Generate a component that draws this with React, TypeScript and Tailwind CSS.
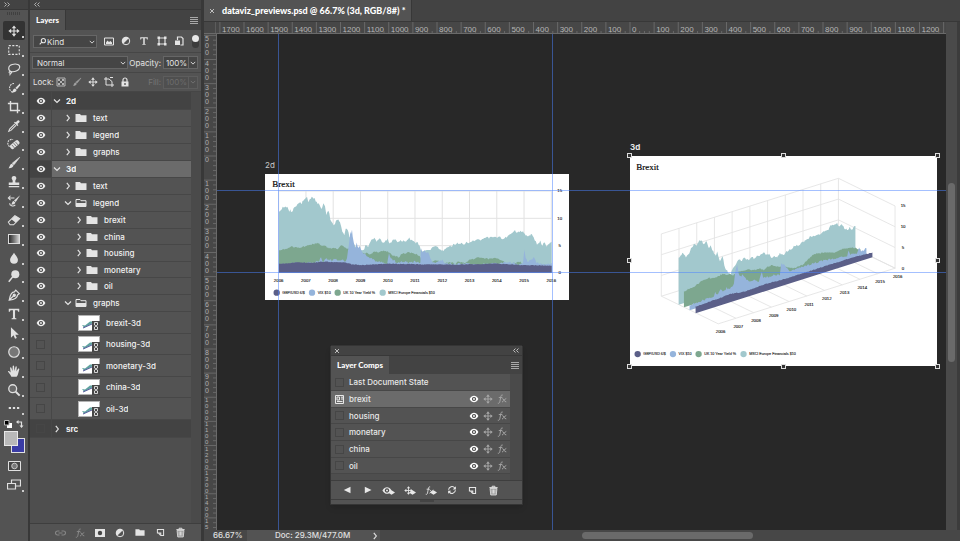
import React from "react";

type IconProps = { className?: string };
type Pt = [number, number];

/* ---------- icons ---------- */

function Svg({ children, className = "h-4 w-4", box = "0 0 16 16" }: { children: React.ReactNode; className?: string; box?: string }) {
  return (
    <svg viewBox={box} className={`shrink-0 ${className}`} fill="none" stroke="currentColor" strokeWidth="1.2" aria-hidden="true">
      {children}
    </svg>
  );
}

const MoveIcon = ({ className }: IconProps) => (
  <Svg className={className}>
    <path d="M8 3v10M3 8h10" strokeWidth="1.5" />
    <path d="M8 .5l3 3.700H5zM8 15.500l3-3.700H5zM.5 8l3.700-3v6zM15.500 8l-3.700-3v6z" fill="currentColor" stroke="none" />
  </Svg>
);
const EyeIcon = ({ className }: IconProps) => (
  <Svg className={className} box="0 0 12 10">
    <path d="M.5 5C2 2.200 4 1 6 1S10 2.200 11.500 5C10 7.800 8 9 6 9S2 7.800 .5 5z" fill="currentColor" stroke="none" />
    <circle cx="6" cy="5" r="2.600" fill="#484848" stroke="none" />
    <circle cx="6" cy="5" r="1.200" fill="currentColor" stroke="none" />
  </Svg>
);
const FolderIcon = ({ open, className = "h-[10px] w-[12px]" }: { open?: boolean; className?: string }) => (
  <Svg className={className} box="0 0 12 10">
    {open ? (
      <>
        <path d="M1 8.500V1.500h4l1 1.200h5v5.800z" strokeWidth="1" />
        <path d="M1 5h10v4H1z" fill="currentColor" stroke="none" />
      </>
    ) : (
      <path d="M.5 9V1h4.500l1 1.300h5.500V9z" fill="currentColor" stroke="none" />
    )}
  </Svg>
);
const Caret = ({ down, className = "h-[8px] w-[8px]" }: { down?: boolean; className?: string }) => (
  <Svg className={className} box="0 0 8 8">
    {down ? <path d="M1 2.500l3 3 3-3" /> : <path d="M2.800 .8l2.500 3.200-2.500 3.200" />}
  </Svg>
);
const MenuIcon = () => (
  <Svg className="h-[7px] w-[8px]" box="0 0 8 7">
    <path d="M0 .5h8M0 2.500h8M0 4.500h8M0 6.500h8" strokeWidth="1" />
  </Svg>
);
const DoubleChevron = ({ left }: { left?: boolean }) => (
  <Svg className="h-[5px] w-[6px]" box="0 0 6 5">
    {left ? <path d="M2.500 .5l-2 2 2 2M5.500 .5l-2 2 2 2" strokeWidth=".9" /> : <path d="M.5 .5l2 2-2 2M3.500 .5l2 2-2 2" strokeWidth=".9" />}
  </Svg>
);
const CloseIcon = () => (
  <Svg className="h-[6px] w-[6px]" box="0 0 6 6">
    <path d="M1 1l4 4M5 1L1 5" strokeWidth=".9" />
  </Svg>
);
const BrushIcon = ({ className }: IconProps) => (
  <Svg className={className}>
    <path d="M14.500 1.500L8 10 6 8.200z" fill="currentColor" strokeWidth=".8" />
    <path d="M5.600 8.800l1.900 1.900c-.5 2.500-3 3.600-6 3.300 1.800-1 1.300-4.600 4.100-5.200z" fill="currentColor" stroke="none" />
  </Svg>
);
const TrashIcon = ({ className }: IconProps) => (
  <Svg className={className}>
    <path d="M3 5l1 9.500h8L13 5z" fill="currentColor" fillOpacity=".45" />
    <path d="M2 3.800h12M6 3.500V1.800h4v1.700" strokeWidth="1.400" />
    <path d="M6 6.500v6M8 6.500v6M10 6.500v6" />
  </Svg>
);
const NewIcon = ({ className }: IconProps) => (
  <Svg className={className}>
    <path d="M2.500 2.500h11v11H8.500v-4.500h-6z" strokeWidth="1.800" />
    <path d="M3.500 9.500l4.500 4.500V9.500z" fill="currentColor" stroke="none" />
  </Svg>
);
const AdjustIcon = ({ className }: IconProps) => (
  <Svg className={className}>
    <circle cx="8" cy="8" r="6" strokeWidth="1.600" />
    <path d="M12.500 3.500A6.300 6.300 0 0 0 3.500 12.500z" fill="currentColor" stroke="none" />
  </Svg>
);
const TypeIcon = ({ className }: IconProps) => (
  <Svg className={className}>
    <path d="M2 2h12v3.500h-1.200L12 3.700H9.200v9l1.600.5V14H5.200v-.8l1.600-.5v-9H4l-.8 1.800H2z" fill="currentColor" stroke="none" />
  </Svg>
);
const FxIcon = ({ className = "h-[11px] w-[11px]" }: IconProps) => (
  <Svg className={className} box="0 0 14 14">
    <path d="M8 1.500C6 .8 5.500 2.500 5.100 5L3.900 11c-.4 2-1.500 2.300-2.800 1.800M2.500 5h5M7.500 6.500c2-.8 2.200 5 5.500 4.500M13 6.200c-2 0-4 5-6 5" strokeWidth="1.300" />
  </Svg>
);
const RefreshIcon = ({ className }: IconProps) => (
  <Svg className={className}>
    <path d="M2.500 7.500a5.500 5.500 0 0 1 9.800-2.800M13.500 8.500a5.500 5.500 0 0 1-9.800 2.800" strokeWidth="1.700" />
    <path d="M14.200 2v5H9.200zM1.800 14V9h5z" fill="currentColor" stroke="none" />
  </Svg>
);
const Applied = ({ kind }: { kind: "eye" | "move" | "fx" }) => (
  <span className="flex items-end">
    {kind === "eye" && <EyeIcon className="h-[9px] w-[10px]" />}
    {kind === "move" && <MoveIcon className="h-[9px] w-[9px]" />}
    {kind === "fx" && <FxIcon className="h-[9px] w-[9px]" />}
    <Svg className="-ml-1 h-[5px] w-[7px]" box="0 0 7 5">
      <path d="M0 2.500L3.500 .3 7 2.500 3.500 4.800z" fill="currentColor" stroke="none" />
    </Svg>
  </span>
);

/* ---------- tool bar ---------- */

const tools: { name: string; art: React.ReactNode }[] = [
  { name: "Move", art: <MoveIcon className="h-3 w-3" /> },
  { name: "Marquee", art: <Svg className="h-[14px] w-[14px]"><path d="M2 3h12v10H2z" strokeDasharray="2.400 1.600" /></Svg> },
  { name: "Lasso", art: <Svg className="h-[14px] w-[14px]"><path d="M5 11C.5 9.500 1 4 6 2.800s9 .2 8.500 3.400S9.500 11.500 5 11zM4.500 11.500c-1.500-1.500-3 .5-1.500 1.200s3-.4 2-1.700M3.800 12.800c.2 1 .1 1.500-.8 2.400" /></Svg> },
  { name: "Quick selection", art: <Svg className="h-[14px] w-[14px]"><path d="M8 3a4.500 5 0 1 0-1 10" strokeDasharray="2 1" /><path d="M15 2.500L9.500 8l2 1.500L15 5z" fill="currentColor" stroke="none" /><path d="M9 8.500c-2.500.3-2 3.500-4 4.500 3 .5 5.800-.5 6-3z" fill="currentColor" stroke="none" /></Svg> },
  { name: "Crop", art: <Svg className="h-[14px] w-[14px]"><path d="M4 1v11h11M1 4h11v11" strokeWidth="1.600" /></Svg> },
  { name: "Eyedropper", art: <Svg className="h-[14px] w-[14px]"><path d="M9 5.500L3 11.500 2 14l2.500-1 6-6" /><path d="M8 4l4 4 1-1-1-1.200 2.200-2.200c1-1-.8-3-2-2L10 3.800 9 3z" fill="currentColor" stroke="none" /></Svg> },
  { name: "Healing brush", art: <Svg className="h-[14px] w-[14px]"><path d="M3 11a4.500 4.500 0 0 1 4-8" strokeDasharray="2 1" /><rect x="3" y="6" width="12" height="5.500" rx="2" transform="rotate(-40 9 9)" fill="currentColor" stroke="none" /><path d="M7.500 7l3.500 4M5.500 9l3.500 4M9.500 5.500l3.500 4" stroke="#535353" strokeWidth=".8" /></Svg> },
  { name: "Brush", art: <BrushIcon className="h-[14px] w-[14px]" /> },
  { name: "Clone stamp", art: <Svg className="h-[14px] w-[14px]"><path d="M8 1a2.700 2.700 0 0 1 2 4.500c-.8 1-.5 2-.3 3H14v3H2v-3h4.300c.2-1 .5-2-.3-3A2.700 2.700 0 0 1 8 1zM2 12.500h12V14H2z" fill="currentColor" stroke="none" /></Svg> },
  { name: "History brush", art: <Svg className="h-[14px] w-[14px]"><path d="M2 4.500h6.500M4 2L1.500 4.500 4 7M3 10.500c0 3 4 4.500 6.500 2" /><path d="M15 1.500L10 9 8 7.500z" fill="currentColor" stroke="none" /><path d="M7.600 8l2 1.700c-.5 2-2.600 2.500-5 2.300 1.500-1 1-3.500 3-4z" fill="currentColor" stroke="none" /></Svg> },
  { name: "Eraser", art: <Svg className="h-[14px] w-[14px]"><path d="M1.500 10.500L9 3l5.500 3.500-7 7h-4z" /><path d="M5 7l4-4 5.500 3.500-4.500 4.500z" fill="currentColor" stroke="none" /></Svg> },
  { name: "Gradient", art: <span className="h-[10px] w-[12px] border border-[#dcdcdc] bg-linear-to-r from-[#2c2c2c] to-[#d0d0d0]" /> },
  { name: "Blur", art: <Svg className="h-[14px] w-[14px]"><path d="M8 2c2 3.500 4.500 5.500 4.500 8a4.500 4.500 0 0 1-9 0c0-2.500 2.500-4.500 4.500-8z" fill="currentColor" stroke="none" /></Svg> },
  { name: "Dodge", art: <Svg className="h-[14px] w-[14px]"><circle cx="9.500" cy="6" r="4.600" fill="currentColor" stroke="none" /><path d="M6.500 9L2 14.500" strokeWidth="1.800" /></Svg> },
  { name: "Pen", art: <Svg className="h-[14px] w-[14px]"><path d="M10 2.500l4 4-2 1.500c0 3-3 5-9.500 6C3.500 8 5 4.500 8.500 4.500zM2.800 13.500L8 8.500" strokeWidth="1.400" /><circle cx="8.300" cy="8.300" r="1.300" fill="currentColor" /></Svg> },
  { name: "Type", art: <TypeIcon className="h-[14px] w-[14px]" /> },
  { name: "Path selection", art: <Svg className="h-[14px] w-[14px]"><path d="M4.500 1.500v12l3-2.800 1.700 4 2-.9-1.700-3.800h4z" fill="currentColor" stroke="none" /></Svg> },
  { name: "Ellipse", art: <Svg className="h-[14px] w-[14px]"><circle cx="8" cy="8" r="6" fill="#777777" strokeWidth="1.400" /></Svg> },
  { name: "Hand", art: <Svg className="h-[14px] w-[14px]"><path d="M5 14.500C4 12 2.500 10.500 1 8.500c.8-1 2-.4 3.200 1.200L3.500 4.500c0-1 1.300-1.200 1.600 0L6.200 8 6.500 2.500c.1-1.200 1.500-1.200 1.600 0L8.500 8l1.200-4.800c.3-1.200 1.600-.8 1.500.3L10.800 8.500l1.800-3c.6-.9 1.700-.3 1.400.7-1 3-1 6-3 8.300z" fill="currentColor" stroke="none" /></Svg> },
  { name: "Zoom", art: <Svg className="h-[14px] w-[14px]"><circle cx="6.500" cy="6.500" r="4.500" fill="#6a6a6a" strokeWidth="1.500" /><path d="M10 10l4.500 4.500" strokeWidth="2.200" /></Svg> },
  { name: "Edit toolbar", art: <Svg className="h-[14px] w-[14px]"><path d="M2 8h2.600M6.700 8h2.600M11.400 8H14" strokeWidth="2.400" /></Svg> },
];

const cornerMark = "absolute right-[1px] bottom-[2px] h-[2px] w-[2px] bg-[#cccccc]";

function Toolbar() {
  return (
    <nav aria-label="Tools" className="flex w-[28px] shrink-0 flex-col bg-[#535353] text-[#e0e0e0]">
      <div className="flex h-[10px] items-center border-b border-[#383838] bg-[#434343] pl-1 text-[#bbbbbb]">
        <DoubleChevron />
      </div>
      <div className="mx-auto mt-[2px] h-[3px] w-[14px] bg-[repeating-linear-gradient(90deg,#404040_0_1px,#535353_1px_2px)]" />
      <div className="flex flex-col items-center pt-[6px]">
        {tools.map((t, i) => (
          <button
            key={t.name}
            aria-label={t.name}
            className={`relative flex w-[22px] items-center justify-center ${i % 7 === 6 ? "h-[18px]" : "h-[19px]"} ${i === 0 ? "rounded-xs bg-[#333333]" : ""}`}
          >
            {t.art}
            <span className={cornerMark} />
          </button>
        ))}
      </div>
      <div className="mx-auto mt-[3px] flex w-[20px] justify-between">
        <button aria-label="Default colours">
          <Svg className="h-[8px] w-[8px]" box="0 0 8 8">
            <path d="M3 3h5v5H3z" fill="#ffffff" stroke="none" />
            <path d="M.5 .5h4.500v4.500H.5z" fill="#000000" stroke="#bbbbbb" strokeWidth="1" />
          </Svg>
        </button>
        <button aria-label="Swap colours">
          <Svg className="h-[8px] w-[8px]" box="0 0 8 8">
            <path d="M2 2h3.500v4" />
            <path d="M0 2l2.500-2v4zM3.500 5.500h4L5.500 8z" fill="currentColor" stroke="none" />
          </Svg>
        </button>
      </div>
      <div className="mx-auto mt-[3px] grid h-[22px] w-[21px] grid-cols-3 grid-rows-3">
        <button aria-label="Background colour" className="col-start-2 col-end-4 row-start-2 row-end-4 border border-[#e0e0e0] bg-[#3a3ca5]" />
        <button aria-label="Foreground colour" className="col-start-1 col-end-3 row-start-1 row-end-3 border border-[#e8e8e8] bg-[#b9b9b9]" />
      </div>
      <div className="mt-[3px] flex flex-col items-center">
        <button aria-label="Quick mask" className="flex h-[19px] items-center">
          <Svg className="h-[10px] w-[13px]" box="0 0 13 10">
            <path d="M.5 .5h12v9H.5z" fill="#454545" strokeWidth="1" />
            <circle cx="6.500" cy="5" r="2.800" fill="#777777" strokeWidth=".8" />
          </Svg>
        </button>
        <button aria-label="Screen mode" className="relative flex h-[19px] w-[22px] items-center justify-center">
          <Svg className="h-[11px] w-[14px]" box="0 0 14 11">
            <path d="M4.500 1h9v6h-9z" />
            <path d="M.5 4.500h8v5.500h-8z" fill="#535353" />
          </Svg>
          <span className={cornerMark} />
        </button>
      </div>
    </nav>
  );
}

/* ---------- layers panel ---------- */

type Layer = {
  name: string;
  kind: "group" | "folder" | "smart";
  level: 0 | 1 | 2;
  open?: boolean;
  hidden?: boolean;
  selected?: boolean;
};

const layers: Layer[] = [
  { name: "2d", kind: "group", level: 0, open: true },
  { name: "text", kind: "folder", level: 1 },
  { name: "legend", kind: "folder", level: 1 },
  { name: "graphs", kind: "folder", level: 1 },
  { name: "3d", kind: "group", level: 0, open: true, selected: true },
  { name: "text", kind: "folder", level: 1 },
  { name: "legend", kind: "folder", level: 1, open: true },
  { name: "brexit", kind: "folder", level: 2 },
  { name: "china", kind: "folder", level: 2 },
  { name: "housing", kind: "folder", level: 2 },
  { name: "monetary", kind: "folder", level: 2 },
  { name: "oil", kind: "folder", level: 2 },
  { name: "graphs", kind: "folder", level: 1, open: true },
  { name: "brexit-3d", kind: "smart", level: 2 },
  { name: "housing-3d", kind: "smart", level: 2, hidden: true },
  { name: "monetary-3d", kind: "smart", level: 2, hidden: true },
  { name: "china-3d", kind: "smart", level: 2, hidden: true },
  { name: "oil-3d", kind: "smart", level: 2, hidden: true },
  { name: "src", kind: "group", level: 0, hidden: true },
];

const Thumb = () => (
  <Svg className="h-[16px] w-[22px]" box="0 0 22 16">
    <path d="M0 0h22v16H0z" fill="#ffffff" stroke="none" />
    <path d="M.5 .5h21v15H.5z" stroke="#666666" strokeWidth="1" strokeDasharray="1 1" />
    <path d="M4 10l3 .5 5-4h2v2L6 12.500z" fill="#5fa39f" stroke="none" />
    <path d="M5 12.500l9-4v1l-9 4z" fill="#4f5699" stroke="none" />
    <path d="M14 6h8v10h-8z" fill="#484848" stroke="none" />
    <path d="M16.500 7.500h3v2.500l-3 2v2.500h3V12l-3-2z" stroke="#e6e6e6" strokeWidth=".9" />
  </Svg>
);

const emptyBox = "h-[9px] w-[9px] border border-[#464646]";

function rowHeight(layer: Layer, index: number) {
  if (layer.kind === "smart") return index % 2 ? "h-[22px]" : "h-[21px]";
  if (layer.kind === "group") return layer.selected ? "h-[17px]" : "h-[18px]";
  return layer.level === 2 && index % 2 === 0 ? "h-[16px]" : "h-[17px]";
}

function LayerRow({ layer, index }: { layer: Layer; index: number }) {
  const tone = layer.selected ? "bg-[#6b6b6b]" : layer.kind === "group" ? "bg-[#434343]" : "bg-[#535353]";
  const indent = layer.kind === "smart" ? "pl-[26px]" : layer.level === 0 ? "pl-[1px]" : layer.level === 1 ? "pl-[12px]" : "pl-[23px]";
  return (
    <li className={`flex border-b border-[#474747] ${rowHeight(layer, index)}`}>
      <button
        aria-label={`Toggle visibility of ${layer.name}`}
        className={`flex w-[22px] shrink-0 items-center justify-center border-r border-[#474747] text-[#f0f0f0] ${layer.kind === "group" ? "bg-[#434343]" : "bg-[#535353]"}`}
      >
        {layer.hidden ? <span className={emptyBox} /> : <EyeIcon className="h-[8px] w-[10px]" />}
      </button>
      <div className={`flex min-w-0 flex-1 items-center text-[#e4e4e4] ${tone} ${indent}`}>
        {layer.kind !== "smart" && (
          <button aria-label={`Expand ${layer.name}`} className="mr-[3px]">
            <Caret down={layer.open} />
          </button>
        )}
        {layer.kind === "folder" && <FolderIcon open={layer.open} />}
        {layer.kind === "smart" && <Thumb />}
        <span className={`truncate text-[8px] leading-3 text-[#f2f2f2] ${layer.kind === "group" ? "pl-[2px] font-bold" : "pl-[6px] font-medium"}`}>
          {layer.name}
        </span>
      </div>
    </li>
  );
}

const field = "border border-[#666666] bg-[#454545]";

function LayersPanel() {
  return (
    <aside className="flex w-[171px] shrink-0 flex-col bg-[#535353] text-[8px] leading-3 text-[#e4e4e4]">
      <div className="flex h-[10px] items-center border-b border-[#383838] bg-[#434343] pl-1 text-[#bbbbbb]">
        <DoubleChevron left />
      </div>
      <div className="flex h-[20px] items-stretch justify-between bg-[#434343]">
        <h2 className="flex items-center border-r border-[#383838] bg-[#535353] px-[6px] font-['Lato',sans-serif] text-[8px] font-black text-white">Layers</h2>
        <button aria-label="Panel menu" className="pr-[3px] text-[#a8a8a8]"><MenuIcon /></button>
      </div>

      <div className="flex h-[23px] items-center border-b border-[#464646] pr-[2px] pl-[3px]">
        <div className="relative w-[64px]">
          <select aria-label="Filter kind" className={`block h-[13px] w-full appearance-none pl-[13px] ${field}`}>
            <option>Kind</option>
          </select>
          <Svg className="pointer-events-none absolute top-[3px] left-[6px] h-[7px] w-[7px]" box="0 0 8 8">
            <circle cx="5" cy="3" r="2.400" /><path d="M3.300 4.700L.8 7.300" />
          </Svg>
          <Caret down className="pointer-events-none absolute top-[4px] right-[2px] h-[6px] w-[6px]" />
        </div>
        <div className="flex flex-1 items-center justify-around pr-1 pl-[3px]">
          <button aria-label="Pixel layers">
            <Svg className="h-[9px] w-[10px]" box="0 0 10 9"><path d="M.5 1h9v7h-9z" strokeWidth="1" /><path d="M2 7V5.500l1.500-2L5 5l1.500-1L8 5.500V7z" fill="currentColor" stroke="none" /></Svg>
          </button>
          <button aria-label="Adjustment layers"><AdjustIcon className="h-[10px] w-[10px]" /></button>
          <button aria-label="Type layers"><TypeIcon className="h-[10px] w-[10px]" /></button>
          <button aria-label="Shape layers">
            <Svg className="h-[10px] w-[10px]" box="0 0 10 10"><path d="M2 2h6v6H2z" /><path d="M.5 .5h2.500v2.500H.5zM7 .5h2.500v2.500H7zM.5 7h2.500v2.500H.5zM7 7h2.500v2.500H7z" fill="currentColor" stroke="none" /></Svg>
          </button>
          <button aria-label="Smart objects">
            <Svg className="h-[10px] w-[10px]" box="0 0 10 10"><path d="M3.500 4V1h4l1.500 1.500V9H6.500" /><path d="M1 4.500h5V9H1z" fill="currentColor" stroke="none" /></Svg>
          </button>
        </div>
        <button aria-label="Filter on or off" className="h-[13px] w-[7px] items-start! rounded-full bg-[#3c3c3c]">
          <span className="block h-[7px] w-[7px] rounded-full bg-[#e8e8e8]" />
        </button>
      </div>

      <div className="flex h-[20px] items-center justify-between border-b border-[#464646] pr-[3px] pl-[2px]">
        <div className="relative w-[96px]">
          <select aria-label="Blend mode" className={`block h-[13px] w-full appearance-none pl-[4px] ${field}`}>
            <option>Normal</option>
          </select>
          <Caret down className="pointer-events-none absolute top-[4px] right-[2px] h-[6px] w-[6px]" />
        </div>
        <label className="flex items-center gap-[2px]">
          Opacity:
          <span className="flex">
            <input defaultValue="100%" className={`h-[13px] w-[26px] pl-[2px] ${field}`} />
            <span className={`-ml-px flex w-[10px] items-center justify-center ${field}`}><Caret down className="h-[6px] w-[6px]" /></span>
          </span>
        </label>
      </div>

      <div className="flex h-[19px] items-center justify-between border-b border-[#464646] pr-[3px] pl-[3px]">
        <div className="flex items-center gap-[2px]">
          <span>Lock:</span>
          <div className="flex items-center gap-[6px]">
            <button aria-label="Lock transparent pixels">
              <Svg className="h-[10px] w-[10px]" box="0 0 10 10">
                <path d="M1 1h8v8H1z" stroke="#b4b4b4" strokeWidth="1" />
                <path d="M2 2h2v2H2zM6 2h2v2H6zM4 4h2v2H4zM2 6h2v2H2zM6 6h2v2H6z" fill="#b4b4b4" stroke="none" />
              </Svg>
            </button>
            <button aria-label="Lock image pixels" className="text-[#a0a0a0]"><BrushIcon className="h-[10px] w-[10px]" /></button>
            <button aria-label="Lock position"><MoveIcon className="h-[10px] w-[10px]" /></button>
            <button aria-label="Lock artboard nesting">
              <Svg className="h-[10px] w-[10px]" box="0 0 10 10"><path d="M2 0v8h8M0 2h5l3 2.500V10M6 .5h3" strokeWidth="1" /></Svg>
            </button>
            <button aria-label="Lock all">
              <Svg className="h-[10px] w-[10px]" box="0 0 10 10"><path d="M3 5V3a2 2 0 0 1 4 0v2" /><path d="M1.500 4.500h7V9.500h-7z" fill="currentColor" stroke="none" /><path d="M5 6v2" stroke="#444444" /></Svg>
            </button>
          </div>
        </div>
        <label className="flex items-center gap-[2px] text-[#757575]">
          Fill:
          <span className="flex">
            <input disabled defaultValue="100%" className="h-[13px] w-[26px] border border-[#5d5d5d] bg-[#4f4f4f] pl-[2px] text-[#6c6c6c]" />
            <span className="-ml-px flex w-[10px] items-center justify-center border border-[#5d5d5d] bg-[#4f4f4f]"><Caret down className="h-[6px] w-[6px]" /></span>
          </span>
        </label>
      </div>

      <div className="flex min-h-0 flex-1 bg-[#4e4e4e]">
        <ul className="min-w-0 flex-1">
          {layers.map((l, i) => <LayerRow key={i} layer={l} index={i} />)}
        </ul>
        <div className="w-[10px] bg-[#4a4a4a]" />
      </div>

      <div className="flex h-[18px] items-center border-t border-[#3e3e3e] pl-[20px] *:w-[20px]">
        <button aria-label="Link layers" className="text-[#858585]">
          <Svg className="h-[6px] w-[11px]" box="0 0 11 6"><path d="M4.500 1h-2a2 2 0 0 0 0 4h2M6.500 1h2a2 2 0 0 1 0 4h-2M3.500 3h4" /></Svg>
        </button>
        <button aria-label="Layer style" className="text-[#8a8a8a]"><FxIcon className="h-[10px] w-[10px]" /></button>
        <button aria-label="Add mask">
          <Svg className="h-[8px] w-[10px]" box="0 0 10 8"><path d="M0 0h10v8H0z" fill="currentColor" stroke="none" /><circle cx="5" cy="4" r="2.200" fill="#444444" stroke="none" /></Svg>
        </button>
        <button aria-label="New adjustment layer"><AdjustIcon className="h-[10px] w-[10px]" /></button>
        <button aria-label="New group"><FolderIcon className="h-[9px] w-[10px]" /></button>
        <button aria-label="New layer"><NewIcon className="h-[9px] w-[9px]" /></button>
        <button aria-label="Delete layer"><TrashIcon className="h-[11px] w-[11px]" /></button>
      </div>
    </aside>
  );
}

/* ---------- rulers ---------- */

const STEP = 24.125;
const ZERO_X = 414;
const ZERO_Y = 122;
const rulerText = "font-['Liberation_Sans',Arial,sans-serif]";

function HorizontalRuler() {
  const marks = Array.from({ length: 31 }, (_, i) => i - 17);
  return (
    <svg className="h-full min-w-0 flex-1" aria-hidden="true">
      {marks.map((m) => {
        const x = ZERO_X + m * STEP;
        return (
          <g key={m}>
            <path d={`M${x} 0V12`} stroke="#686868" />
            {[1, 2, 3, 4].map((k) => <path key={k} d={`M${x + (k * STEP) / 5} 9V12`} stroke="#686868" />)}
            {m < 13 && <text x={x + 2} y="10" fill="#b4b4b4" fontSize="8" className={rulerText}>{Math.abs(m) * 100}</text>}
          </g>
        );
      })}
    </svg>
  );
}

function VerticalRuler() {
  const marks = Array.from({ length: 21 }, (_, i) => i - 5);
  return (
    <svg className="h-full w-[13px] shrink-0 border-r border-[#6a6a6a] bg-[#474747]" aria-hidden="true">
      {marks.map((m) => {
        const y = ZERO_Y + m * STEP;
        const digits = String(Math.abs(m) * 100).split("");
        const small = digits.length > 3;
        return (
          <g key={m}>
            <path d={`M0 ${y}H12`} stroke="#686868" />
            {[1, 2, 3, 4].map((k) => <path key={k} d={`M9 ${y + (k * STEP) / 5}H12`} stroke="#686868" />)}
            <text y={y + (small ? 5 : 6)} fill="#b0b0b0" fontSize={small ? 6 : 7} className={rulerText}>
              {digits.map((d, k) => (
                <tspan key={k} x="1" dy={k === 0 ? 0 : small ? 6 : 7}>{d}</tspan>
              ))}
            </text>
          </g>
        );
      })}
    </svg>
  );
}

/* ---------- charts ---------- */

const NAVY = "#5b5f88";
const BLUE = "#95b4db";
const GREEN = "#7da78f";
const TEAL = "#a2c8cd";

// Turns coarse samples into a daily-looking outline with a small repeatable jitter.
function area(points: Pt[], base: string, jitter: number) {
  const out: string[] = [];
  let seed = 7;
  for (let i = 0; i < points.length - 1; i++) {
    const [x0, y0] = points[i];
    const [x1, y1] = points[i + 1];
    const n = Math.max(1, Math.round((x1 - x0) / 3));
    for (let k = 0; k < n; k++) {
      seed = (seed * 1103 + 12345) % 65536;
      const j = (seed / 65536 - 0.5) * jitter;
      out.push(`${(x0 + ((x1 - x0) * k) / n).toFixed(1)},${(y0 + ((y1 - y0) * k) / n + j).toFixed(1)}`);
    }
  }
  const last = points[points.length - 1];
  return `M${out.join("L")}L${last[0]},${last[1]}${base}`;
}

const flatTeal: Pt[] = [[72,168],[80,158],[86,152],[97,152],[103,165],[106,160],[108,172],[113,164],[118,158],[124,152],[130,142],[136,138],[140,146],[145,132],[152,128],[156,126],[160,142],[165,131],[170,126],[176,126],[182,134],[188,145],[194,148],[200,158],[205,145],[210,155],[214,175],[220,162],[226,190],[233,203],[238,208],[243,194],[250,190],[255,200],[262,228],[268,236],[272,218],[278,226],[283,240],[290,258],[300,272],[310,282],[320,284],[328,278],[333,268],[340,272],[346,256],[352,252],[358,248],[365,256],[374,250],[381,258],[385,262],[392,255],[398,250],[404,264],[412,254],[420,250],[424,258],[434,254],[442,258],[448,254],[456,256],[463,248],[470,255],[480,260],[488,262],[494,270],[498,285],[507,284],[515,284],[524,286],[532,275],[540,272],[546,272],[552,283],[562,285],[572,280],[582,274],[592,270],[604,262],[616,262],[624,267],[634,260],[644,264],[654,256],[664,250],[676,252],[690,244],[702,247],[714,244],[726,248],[736,244],[742,250],[752,246],[762,240],[770,232],[780,226],[788,232],[796,226],[804,226],[812,240],[820,240],[828,236],[836,246],[846,266],[856,258],[862,270],[868,258],[874,272],[882,264],[890,258]];
const flatGreen: Pt[] = [[72,284],[84,280],[96,278],[108,272],[120,276],[134,276],[148,272],[160,270],[172,266],[186,262],[198,268],[210,272],[225,278],[238,276],[248,280],[258,268],[268,274],[280,280],[300,290],[325,292],[335,292],[345,296],[358,288],[372,290],[386,285],[398,288],[405,292],[415,300],[432,304],[440,295],[460,290],[478,294],[492,300],[497,305],[500,320],[530,320],[540,314],[550,316],[556,324],[575,322],[590,320],[600,325],[610,316],[622,322],[634,320],[642,314],[655,310],[665,305],[680,305],[700,310],[720,308],[735,312],[745,316],[752,325],[780,322],[796,318],[805,326],[820,318],[830,325],[860,326],[890,330]];
const flatBlue: Pt[] = [[72,324],[180,322],[186,314],[192,320],[198,304],[204,318],[212,312],[222,310],[230,314],[240,308],[250,314],[262,312],[270,318],[276,306],[281,275],[284,250],[286,225],[288,236],[291,222],[293,240],[296,262],[300,280],[305,262],[310,275],[314,268],[318,282],[324,290],[335,300],[345,306],[356,312],[368,320],[380,318],[396,326],[402,292],[408,308],[416,314],[430,322],[445,316],[460,322],[480,318],[496,320],[498,275],[502,290],[508,285],[514,295],[520,290],[526,308],[532,320],[545,322],[562,312],[568,324],[600,324],[700,326],[760,320],[790,325],[804,324],[808,280],[812,305],[820,320],[838,305],[845,322],[870,326],[890,322]];
const flatNavy: Pt[] = [[72,324],[130,320],[170,322],[200,318],[270,320],[290,326],[320,328],[400,324],[500,326],[600,327],[720,324],[800,328],[890,330]];

const deepTeal: Pt[] = [[174,355],[180,345],[188,338],[196,350],[206,338],[214,322],[220,314],[228,318],[236,300],[244,304],[250,312],[258,306],[264,325],[270,318],[278,335],[286,348],[290,338],[298,362],[306,352],[314,385],[322,396],[330,403],[336,385],[344,376],[350,365],[356,358],[364,362],[370,356],[380,358],[388,360],[394,350],[400,355],[412,346],[420,346],[430,336],[438,345],[446,343],[454,355],[462,350],[470,352],[478,340],[488,345],[498,335],[508,330],[520,320],[532,316],[545,308],[556,302],[568,292],[580,288],[590,283],[600,284],[612,274],[624,270],[630,256],[640,258],[650,250],[656,260],[664,254],[672,266],[680,270],[688,262],[694,268],[705,258]];
const deepGreen: Pt[] = [[190,455],[205,446],[220,440],[235,430],[250,420],[266,414],[280,416],[292,410],[306,402],[316,405],[326,402],[335,408],[350,395],[370,392],[385,388],[400,392],[415,386],[430,390],[440,380],[455,376],[470,380],[485,382],[500,382],[520,385],[545,375],[560,362],[570,350],[585,342],[600,340],[620,336],[640,340],[660,330],[680,325],[700,324],[720,328]];
const deepBlue: Pt[] = [[207,496],[225,488],[240,484],[280,470],[284,458],[292,464],[300,450],[310,455],[318,444],[328,448],[335,440],[340,430],[344,395],[350,378],[354,402],[360,408],[368,405],[378,418],[388,424],[400,420],[415,425],[424,398],[428,412],[445,412],[460,404],[478,405],[482,370],[490,374],[500,386],[510,395],[530,385],[560,376],[600,364],[640,356],[680,350],[684,333],[690,345],[710,340],[716,325],[722,336],[738,325]];
const deepNavy: Pt[] = [[225,500],[300,474],[330,462],[370,456],[430,434],[500,415],[600,383],[700,352],[756,338]];

const years = Array.from({ length: 11 }, (_, i) => 2006 + i);
const chartText = "font-['Liberation_Sans',Arial,sans-serif]";

function Legend({ x, y }: { x: number; y: number }) {
  const items: [number, string, string][] = [
    [0, NAVY, "GBP/USD £/$"],
    [106, BLUE, "VIX $10"],
    [183, GREEN, "UK 10 Year Yield %"],
    [318, TEAL, "MSCI Europe Financials $10"],
  ];
  return (
    <g fontSize="11" fill="#1c1c1c" stroke="#1c1c1c" strokeWidth=".3" className={chartText}>
      {items.map(([dx, colour, label]) => (
        <g key={label}>
          <circle cx={x + dx} cy={y} r="9.500" fill={colour} stroke="none" />
          <text x={x + dx + 17} y={y + 4}>{label}</text>
        </g>
      ))}
    </g>
  );
}

function FlatChart() {
  return (
    <svg viewBox="30 55 912 377" className="block w-[304px] bg-white" role="img" aria-label="Brexit area chart">
      <text x="52" y="93" fontSize="27" fill="#000000" stroke="#000000" strokeWidth=".5" className="font-['Liberation_Serif',serif]">Brexit</text>
      <g stroke="#e2e2e2" strokeWidth="3">
        {years.map((yr, i) => <path key={yr} d={`M${71 + i * 81.800} 106V351`} />)}
        <path d="M71 106H889M71 188H889M71 270H889M71 351H889" />
      </g>
      <path d={area(flatTeal, "V351H72Z", 7)} fill={TEAL} />
      <path d={area(flatGreen, "V351H72Z", 4)} fill={GREEN} />
      <path d={area(flatBlue, "V351H72Z", 7)} fill={BLUE} />
      <path d={area(flatNavy, "V351H72Z", 2)} fill={NAVY} />
      <g fontSize="13" fill="#111111" stroke="#111111" strokeWidth=".3" textAnchor="middle" className={chartText}>
        {years.map((yr, i) => <text key={yr} x={71 + i * 81.800} y="380">{yr}</text>)}
        {[15, 10, 5, 0].map((v, i) => <text key={v} x="914" y={110 + i * 81.800}>{v}</text>)}
      </g>
      <Legend x={65} y={411} />
    </svg>
  );
}

function DeepChart() {
  return (
    <svg viewBox="28 48 922 632" className="block w-[307px] bg-white" role="img" aria-label="Brexit three-dimensional area chart">
      <text x="47" y="91" fontSize="27" fill="#000000" stroke="#000000" strokeWidth=".5" className="font-['Liberation_Serif',serif]">Brexit</text>
      <g stroke="#e2e2e2" strokeWidth="2.500" fill="none">
        {years.map((yr, i) => (
          <path key={yr} d={`M${122 + i * 53.200} ${282 - i * 16.700}v187l171 83`} />
        ))}
        {[0, 1, 2, 3].map((i) => (
          <path key={i} d={`M122 ${282 + i * 62.400}L654 ${115 + i * 62.400}L824 ${198 + i * 62.400}`} />
        ))}
        <path d="M293 552L824 385V198" />
      </g>
      <path d={area(deepTeal, "V330L174,495Z", 6)} fill={TEAL} />
      <path d={area(deepGreen, "V342L190,502Z", 4)} fill={GREEN} />
      <path d={area(deepBlue, "V345L207,511Z", 6)} fill={BLUE} />
      <path d={area(deepNavy, "V352L225,520Z", 2)} fill={NAVY} />
      <g fontSize="13" fill="#111111" stroke="#111111" strokeWidth=".3" textAnchor="middle" className={chartText}>
        {years.map((yr, i) => <text key={yr} x={300 + i * 53.200} y={581 - i * 16.800}>{yr}</text>)}
        {[15, 10, 5, 0].map((v, i) => <text key={v} x="848" y={202 + i * 62.500}>{v}</text>)}
      </g>
      <Legend x={51} y={643} />
    </svg>
  );
}

/* ---------- layer comps window ---------- */

const comps = ["Last Document State", "brexit", "housing", "monetary", "china", "oil"];

function LayerComps() {
  return (
    <section className="absolute top-[311px] left-[113px] w-[193px] rounded-t-xs border border-[#353535] bg-[#535353] text-[#e8e8e8] shadow-md">
      <header className="flex h-[9px] items-center justify-between rounded-t-xs bg-[#434343] px-[3px] text-[#cccccc]">
        <button aria-label="Close"><CloseIcon /></button>
        <button aria-label="Collapse"><DoubleChevron left /></button>
      </header>
      <div className="flex h-[19px] items-stretch justify-between border-t border-[#383838] bg-[#434343]">
        <h2 className="flex items-center bg-[#535353] px-[6px] font-['Lato',sans-serif] text-[8px] font-black text-white">Layer Comps</h2>
        <button aria-label="Panel menu" className="pr-[3px] text-[#a8a8a8]"><MenuIcon /></button>
      </div>
      <div className="flex h-[106px]">
        <ul className="min-w-0 flex-1 bg-[#4e4e4e] text-[8px] font-medium">
          {comps.map((c, i) => (
            <li key={c} className={`flex items-center border-b border-[#474747] ${i % 3 === 2 ? "h-[16px]" : "h-[17px]"} ${i === 1 ? "bg-[#6b6b6b]" : "bg-[#535353]"}`}>
              <button aria-label={`Apply ${c}`} className="flex w-[17px] items-center justify-center">
                {i === 1 ? (
                  <Svg className="h-[9px] w-[9px]" box="0 0 9 9">
                    <path d="M.5 .5h8v8h-8zM2 2h2.500v3H2zM6 2.200h2M6 4h2M2 6.500h5.500" strokeWidth="1" />
                  </Svg>
                ) : (
                  <span className={emptyBox} />
                )}
              </button>
              <span className="flex-1 pl-px leading-3">{c}</span>
              {i > 0 && (
                <span className="flex items-center gap-[4px] pr-[3px] text-[#a8a8a8]">
                  <EyeIcon className="h-[8px] w-[10px] text-white" />
                  <MoveIcon className="h-[10px] w-[10px]" />
                  <FxIcon className="h-[10px] w-[10px]" />
                </span>
              )}
            </li>
          ))}
        </ul>
        <div className="w-[12px] bg-[#4a4a4a]" />
      </div>
      <footer className="flex h-[19px] items-center border-t border-[#3e3e3e] pl-[5px] *:w-[21px]">
        <button aria-label="Previous comp"><Svg className="h-[8px] w-[8px]" box="0 0 8 8"><path d="M7.500 .8v6.400L.8 4z" fill="currentColor" stroke="none" /></Svg></button>
        <button aria-label="Next comp"><Svg className="h-[8px] w-[8px]" box="0 0 8 8"><path d="M.8 .8v6.400L7.500 4z" fill="currentColor" stroke="none" /></Svg></button>
        <button aria-label="Update visibility"><Applied kind="eye" /></button>
        <button aria-label="Update position"><Applied kind="move" /></button>
        <button aria-label="Update appearance"><Applied kind="fx" /></button>
        <button aria-label="Update comp"><RefreshIcon className="h-[10px] w-[10px]" /></button>
        <button aria-label="New comp"><NewIcon className="h-[9px] w-[9px]" /></button>
        <button aria-label="Delete comp"><TrashIcon className="h-[11px] w-[11px]" /></button>
      </footer>
      <div className="flex h-[5px] justify-center border-t border-[#3e3e3e]">
        <span className="h-[2px] w-[14px] bg-[#444444]" />
      </div>
    </section>
  );
}

/* ---------- document ---------- */

const handles = [
  "-top-[3px] -left-[3px]",
  "-top-[3px] left-[151px]",
  "-top-[3px] -right-[3px]",
  "top-[102px] -left-[3px]",
  "top-[102px] -right-[3px]",
  "-bottom-[3px] -left-[3px]",
  "-bottom-[3px] left-[151px]",
  "-right-[3px] -bottom-[3px]",
];

const guide = "pointer-events-none absolute bg-[#4a82ff]/50";

function Canvas() {
  return (
    <main className="relative min-w-0 flex-1 overflow-hidden bg-[#282828]">
      <figure className="absolute top-[125px] left-[48px] text-[#c8c8c8]">
        <figcaption className="h-[15px] text-[8px] leading-3">2d</figcaption>
        <FlatChart />
      </figure>
      <figure className="absolute top-[107px] left-[413px] text-[#e8e8e8]">
        <figcaption className="h-[15px] text-[8px] leading-3 font-bold">3d</figcaption>
        <div className="relative">
          <DeepChart />
          {handles.map((h) => <span key={h} className={`absolute h-[5px] w-[5px] border border-[#dddddd] bg-[#333333] ${h}`} />)}
        </div>
      </figure>
      <span className={`${guide} inset-y-0 left-[61px] w-px`} />
      <span className={`${guide} inset-y-0 left-[335px] w-px`} />
      <span className={`${guide} inset-x-0 top-[156px] h-px`} />
      <span className={`${guide} inset-x-0 top-[238px] h-px`} />
      <LayerComps />
    </main>
  );
}

function DocumentWindow() {
  return (
    <div className="flex min-w-0 flex-1 flex-col bg-[#434343]">
      <div className="flex h-[22px] border-b border-[#383838]">
        <div className="flex items-center gap-[7px] border-r border-[#383838] bg-[#535353] px-[5px]">
          <button aria-label="Close document" className="text-[#cccccc]"><CloseIcon /></button>
          <h1 className="font-['Lato',sans-serif] text-[9px] font-black whitespace-nowrap text-white">dataviz_previews.psd @ 66.7% (3d, RGB/8#) *</h1>
        </div>
      </div>
      <div className="flex min-h-0 flex-1">
        <div className="flex min-w-0 flex-1 flex-col">
          <div className="flex h-[12px] border-b border-[#6a6a6a] bg-[#474747]">
            <div className="w-[12px] border-r border-[#5c5c5c]" />
            <HorizontalRuler />
          </div>
          <div className="flex min-h-0 flex-1">
            <VerticalRuler />
            <Canvas />
          </div>
        </div>
        <div className="flex w-[11px] justify-center bg-[#4a4a4a] pt-[161px]">
          <div className="h-[179px] w-[7px] rounded-full bg-[#6a6a6a]" />
        </div>
        <div className="w-[3px] bg-[#3c3c3c]" />
      </div>
      <div className="flex h-[11px] items-center bg-[#474747] text-[8px] leading-[11px] font-medium text-[#e0e0e0]">
        <span className="w-[43px] pl-[9px]">66.67%</span>
        <div className="flex w-[133px] items-center justify-between bg-[#535353] pr-px pl-[28px]">
          <span>Doc: 29.3M/477.0M</span>
          <Caret />
        </div>
        <div className="flex-1 pl-[202px]">
          <div className="h-[7px] w-[171px] rounded-full bg-[#6a6a6a]" />
        </div>
      </div>
    </div>
  );
}

export default function App() {
  return (
    <div className="flex h-screen overflow-hidden bg-[#383838] font-['Inter',sans-serif] [&_button]:flex [&_button]:items-center [&_button]:justify-center">
      <Toolbar />
      <div className="w-[2px]" />
      <LayersPanel />
      <div className="w-[3px]" />
      <DocumentWindow />
    </div>
  );
}
